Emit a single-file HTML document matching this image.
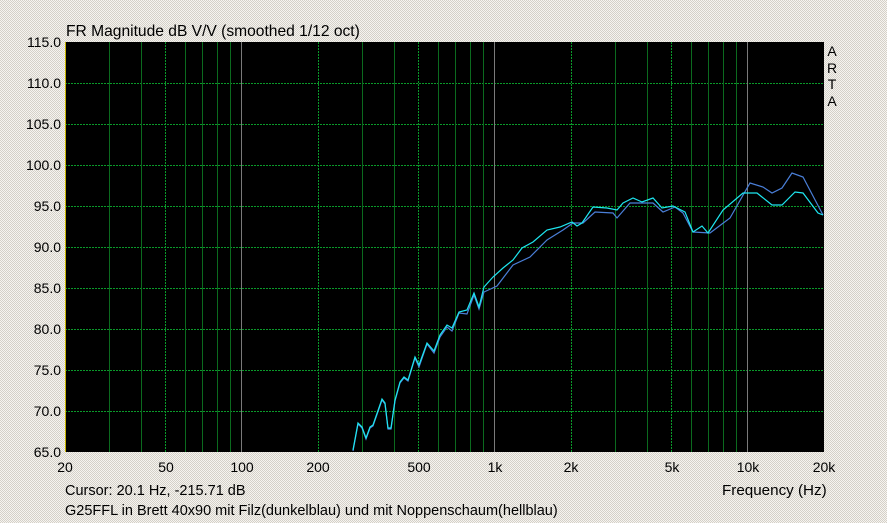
<!DOCTYPE html>
<html><head><meta charset="utf-8"><style>
html,body{margin:0;padding:0;width:887px;height:523px;overflow:hidden}
svg{display:block}
text{font-family:"Liberation Sans",sans-serif;font-size:14px;fill:#000}
</style></head><body>
<svg width="887" height="523" viewBox="0 0 887 523" xmlns="http://www.w3.org/2000/svg">
<defs>
<pattern id="bg" width="2" height="2" patternUnits="userSpaceOnUse">
<rect width="2" height="2" fill="#f6f4f0"/>
<rect width="1" height="1" fill="#d4d0c8"/>
<rect x="1" y="1" width="1" height="1" fill="#d4d0c8"/>
</pattern>
</defs>
<rect width="887" height="523" fill="url(#bg)"/>
<rect x="65" y="42" width="759" height="410" fill="#000"/>
<g stroke="#0a9a2a" stroke-width="1" stroke-dasharray="2,1">
<line x1="65" x2="824" y1="83.5" y2="83.5"/>
<line x1="65" x2="824" y1="124.5" y2="124.5"/>
<line x1="65" x2="824" y1="165.5" y2="165.5"/>
<line x1="65" x2="824" y1="206.5" y2="206.5"/>
<line x1="65" x2="824" y1="247.5" y2="247.5"/>
<line x1="65" x2="824" y1="288.5" y2="288.5"/>
<line x1="65" x2="824" y1="329.5" y2="329.5"/>
<line x1="65" x2="824" y1="370.5" y2="370.5"/>
<line x1="65" x2="824" y1="411.5" y2="411.5"/>
</g>
<g stroke="#0b6a1e" stroke-width="1">
<line y1="42" y2="452" x1="109.5" x2="109.5"/>
<line y1="42" y2="452" x1="141.5" x2="141.5"/>
<line y1="42" y2="452" x1="185.5" x2="185.5"/>
<line y1="42" y2="452" x1="202.5" x2="202.5"/>
<line y1="42" y2="452" x1="217.5" x2="217.5"/>
<line y1="42" y2="452" x1="230.5" x2="230.5"/>
<line y1="42" y2="452" x1="362.5" x2="362.5"/>
<line y1="42" y2="452" x1="394.5" x2="394.5"/>
<line y1="42" y2="452" x1="438.5" x2="438.5"/>
<line y1="42" y2="452" x1="455.5" x2="455.5"/>
<line y1="42" y2="452" x1="470.5" x2="470.5"/>
<line y1="42" y2="452" x1="483.5" x2="483.5"/>
<line y1="42" y2="452" x1="615.5" x2="615.5"/>
<line y1="42" y2="452" x1="647.5" x2="647.5"/>
<line y1="42" y2="452" x1="691.5" x2="691.5"/>
<line y1="42" y2="452" x1="708.5" x2="708.5"/>
<line y1="42" y2="452" x1="723.5" x2="723.5"/>
<line y1="42" y2="452" x1="736.5" x2="736.5"/>
</g>
<g stroke="#0a9a2a" stroke-width="1" stroke-dasharray="2,1">
<line y1="42" y2="452" x1="165.5" x2="165.5"/>
<line y1="42" y2="452" x1="318.5" x2="318.5"/>
<line y1="42" y2="452" x1="418.5" x2="418.5"/>
<line y1="42" y2="452" x1="571.5" x2="571.5"/>
<line y1="42" y2="452" x1="671.5" x2="671.5"/>
</g>
<g stroke="#7a7a7a" stroke-width="1">
<line y1="42" y2="452" x1="241.5" x2="241.5"/>
<line y1="42" y2="452" x1="494.5" x2="494.5"/>
<line y1="42" y2="452" x1="747.5" x2="747.5"/>
</g>
<line x1="65.5" x2="65.5" y1="42" y2="452" stroke="#c8b400"/>
<polyline fill="none" stroke="#4a7fd8" stroke-width="1.2" points="353,451 358,424 362,428 366,439 370,428 373,426 382,400 385,404 388,429 391,429 395,401 400,383 404,378 408,381 415,358 419,367 427,344 434,353 440,337 447,327 452,331 459,313 467,314 474,295 479,309 484,292 497,286 513,265 530,257 547,240 563,230 573,223 583,223 595,212 613,213 617,218 630,203 653,203 663,212 675,207 683,213 693,232 710,233 730,218 750,183 763,187 772,193 782,188 792,173 803,177 823,215"/>
<polyline fill="none" stroke="#1ee6f0" stroke-width="1.2" points="353,450 358,423 362,427 366,438 370,427 373,425 382,399 385,403 388,428 391,428 395,400 400,382 404,377 408,380 415,357 419,365 427,343 434,351 440,335 447,325 452,328 459,312 467,310 474,293 479,307 484,287 493,277 503,268 513,260 522,248 533,242 547,230 560,227 572,222 577,226 582,223 593,207 607,208 617,210 623,203 633,198 642,202 653,198 662,208 673,206 685,212 693,232 702,226 708,233 723,210 743,193 757,193 772,205 782,205 795,192 803,193 818,213 823,215"/>
<text x="66" y="36" style="font-size:15.6px">FR Magnitude dB V/V (smoothed 1/12 oct)</text>
<g text-anchor="end">
<text x="61" y="47">115.0</text>
<text x="61" y="88">110.0</text>
<text x="61" y="129">105.0</text>
<text x="61" y="170">100.0</text>
<text x="61" y="211">95.0</text>
<text x="61" y="252">90.0</text>
<text x="61" y="293">85.0</text>
<text x="61" y="334">80.0</text>
<text x="61" y="375">75.0</text>
<text x="61" y="416">70.0</text>
<text x="61" y="457">65.0</text>
</g>
<g text-anchor="middle">
<text x="65" y="472">20</text>
<text x="166" y="472">50</text>
<text x="242" y="472">100</text>
<text x="318" y="472">200</text>
<text x="419" y="472">500</text>
<text x="495" y="472">1k</text>
<text x="571" y="472">2k</text>
<text x="672" y="472">5k</text>
<text x="748" y="472">10k</text>
<text x="824" y="472">20k</text>
<text x="832" y="56">A</text>
<text x="832" y="73">R</text>
<text x="832" y="89">T</text>
<text x="832" y="106">A</text>
</g>
<text x="722" y="495" style="font-size:15.2px">Frequency (Hz)</text>
<text x="65" y="495" style="font-size:14.5px">Cursor: 20.1 Hz, -215.71 dB</text>
<text x="65" y="515" style="font-size:14.5px">G25FFL in Brett 40x90 mit Filz(dunkelblau) und mit Noppenschaum(hellblau)</text>
</svg>
</body></html>
